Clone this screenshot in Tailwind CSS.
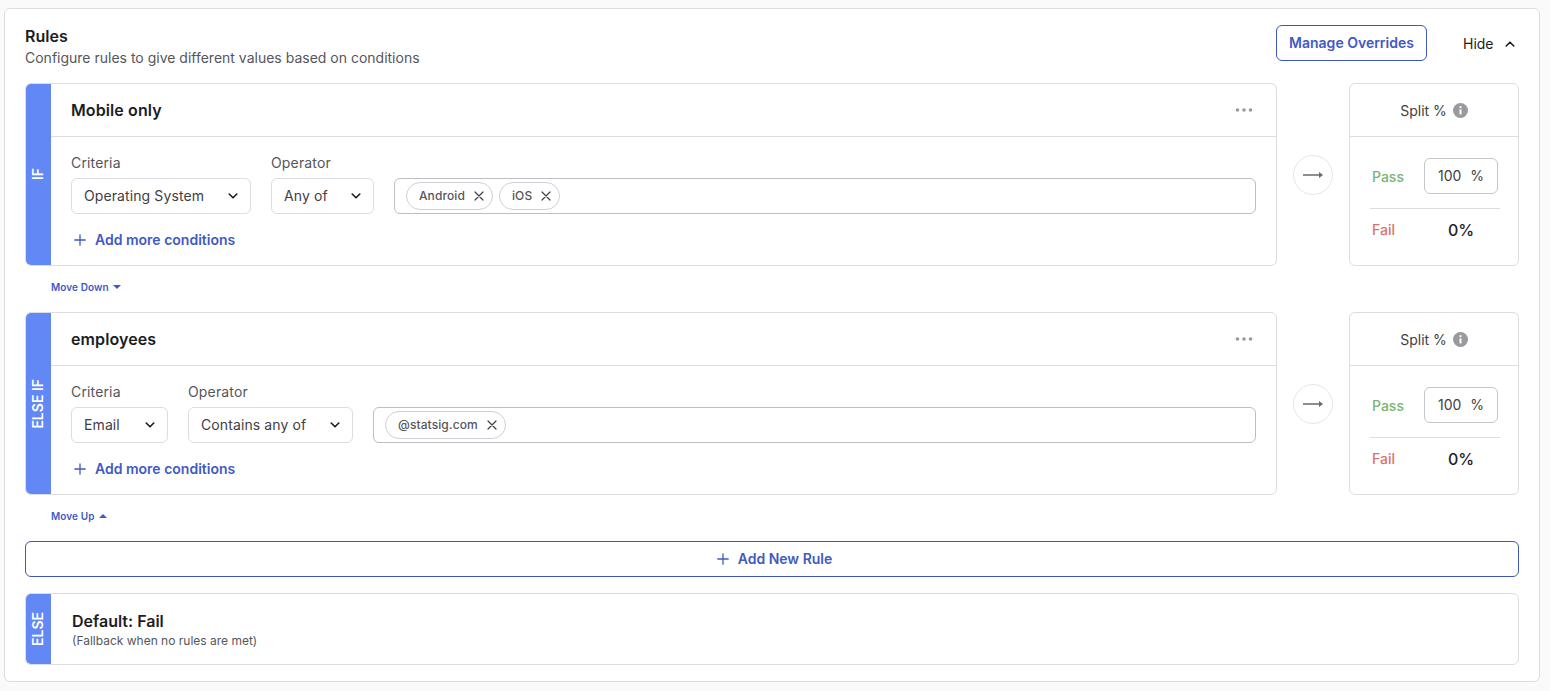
<!DOCTYPE html>
<html>
<head>
<meta charset="utf-8">
<script src="https://cdn.jsdelivr.net/npm/@tailwindcss/browser@4"></script>
</head>
<body class="bg-[#fafafb] font-['Inter',sans-serif] text-[#1d1d1f]">
<div class="w-[1550px] h-[691px] overflow-hidden pt-2 pl-1">
  <div class="w-[1536px] h-[674px] bg-white border border-[#dcdde3] rounded-md px-5 flex flex-col">
    <div class="h-[74px] flex items-start justify-between shrink-0">
      <div class="pt-[17px]">
        <div class="text-base font-semibold leading-5 text-[#1d1d1f]">Rules</div>
        <div class="text-sm leading-[23px] text-[#55565c]">Configure rules to give different values based on conditions</div>
      </div>
      <div class="flex items-center pt-4">
        <div class="w-[151px] h-9 border border-[#3f57b8] rounded-md flex items-center justify-center text-sm font-semibold text-[#3f5ac4]">Manage Overrides</div>
        <div class="w-[92px] pl-[36px] pt-[2px] flex items-center gap-[11px] text-sm text-[#1d1d1f]">Hide
          <svg class="w-[10px] h-[6px]" viewBox="0 0 10 6" fill="none" stroke="#1d1d1f" stroke-width="1.6" stroke-linecap="round" stroke-linejoin="round"><path d="M1.2 5 5 1.2 8.8 5"/></svg>
        </div>
      </div>
    </div>

    <!-- rule 1 -->
    <div class="flex h-[183px] shrink-0">
      <div class="w-[1252px] flex border border-[#dcdde3] rounded-md overflow-hidden">
        <div class="w-[26px] bg-[#6188f5] flex items-center justify-center -my-px -ml-px"><span class="text-white text-sm font-semibold [writing-mode:vertical-rl] rotate-180">IF</span></div>
        <div class="flex-1 flex flex-col">
          <div class="h-[53px] border-b border-[#dcdde3] flex items-center justify-between pl-5 pr-[23px]">
            <div class="text-base font-semibold tracking-[0.1px] text-[#1d1d1f]">Mobile only</div>
            <svg class="w-[18px] h-1" viewBox="0 0 18 4" fill="#9a9a9e"><circle cx="2.5" cy="2" r="1.8"/><circle cx="9" cy="2" r="1.8"/><circle cx="15.5" cy="2" r="1.8"/></svg>
          </div>
          <div class="pl-5 pr-[20px] flex-1">
            <div class="flex gap-5 items-end mt-[15px]">
              <div class="w-[180px]">
                <div class="text-sm leading-[22px] h-[26px] tracking-[0.15px] text-[#55565c]">Criteria</div>
                <div class="h-9 border border-[#dcdde3] rounded-md flex items-center justify-between pl-3 pr-3 text-sm tracking-[0.1px] text-[#3f4045]">Operating System
                  <svg class="w-[10px] h-[6px]" viewBox="0 0 10 6" fill="none" stroke="#1d1d1f" stroke-width="1.6" stroke-linecap="round" stroke-linejoin="round"><path d="M1.2 1 5 4.8 8.8 1"/></svg>
                </div>
              </div>
              <div class="w-[103px]">
                <div class="text-sm leading-[22px] h-[26px] tracking-[0.15px] text-[#55565c]">Operator</div>
                <div class="h-9 border border-[#dcdde3] rounded-md flex items-center justify-between pl-3 pr-3 text-sm tracking-[0.1px] text-[#3f4045]">Any of
                  <svg class="w-[10px] h-[6px]" viewBox="0 0 10 6" fill="none" stroke="#1d1d1f" stroke-width="1.6" stroke-linecap="round" stroke-linejoin="round"><path d="M1.2 1 5 4.8 8.8 1"/></svg>
                </div>
              </div>
              <div class="flex-1 h-9 border border-[#bdbec4] rounded-md flex items-center pl-[11px] gap-[6px]">
                <div class="h-7 border border-[#cfd0d6] rounded-full flex items-center pl-3 pr-[8px] gap-[9px] text-xs font-medium tracking-[0.1px] text-[#55565c]">Android
                  <svg class="w-[10px] h-[10px]" viewBox="0 0 10 10" fill="none" stroke="#3f4045" stroke-width="1.2" stroke-linecap="round"><path d="M1 1l8 8M9 1l-8 8"/></svg>
                </div>
                <div class="h-7 border border-[#cfd0d6] rounded-full flex items-center pl-3 pr-[8px] gap-[9px] text-xs font-medium tracking-[0.1px] text-[#55565c]">iOS
                  <svg class="w-[10px] h-[10px]" viewBox="0 0 10 10" fill="none" stroke="#3f4045" stroke-width="1.2" stroke-linecap="round"><path d="M1 1l8 8M9 1l-8 8"/></svg>
                </div>
              </div>
            </div>
            <div class="flex items-center gap-[9px] mt-[15px] pl-[3px] h-[22px] text-sm font-semibold text-[#3f5ac4]">
              <svg class="w-[12px] h-[12px]" viewBox="0 0 12 12" fill="none" stroke="#3f5ac4" stroke-width="1.3" stroke-linecap="round"><path d="M6 .8v10.4M.8 6h10.4"/></svg>
              Add more conditions
            </div>
          </div>
        </div>
      </div>
      <div class="w-[72px] flex justify-center pt-[72px]">
        <div class="w-10 h-10 rounded-full border border-[#e6e6ea] flex items-center justify-center">
          <svg class="w-5 h-[8px]" viewBox="0 0 20 8" fill="#6a6a6e"><path d="M0 3.200h16V1l4 3-4 3V4.800H0z"/></svg>
        </div>
      </div>
      <div class="w-[170px] border border-[#dcdde3] rounded-md flex flex-col">
        <div class="h-[53px] border-b border-[#dcdde3] flex items-center justify-center gap-[6px] pt-[2px] text-sm text-[#3f4045]">Split %
          <svg class="w-[15px] h-[15px] -translate-y-px" viewBox="0 0 15 15"><circle cx="7.5" cy="7.5" r="7.500" fill="#9a9a9e"/><circle cx="7.500" cy="4.200" r="1.100" fill="#fff"/><rect x="6.500" y="6.400" width="2" height="5" fill="#fff"/></svg>
        </div>
        <div class="px-5 pt-[21px]">
          <div class="flex items-center justify-between h-9">
            <span class="text-sm font-medium text-[#79b473] pl-[2px] pt-[1px]">Pass</span>
            <div class="w-[74px] h-9 border border-[#c5c6cc] rounded-md flex items-center justify-between pl-[13px] pr-[13px] text-sm text-[#3f4045]"><span>100</span><span>%</span></div>
          </div>
          <div class="border-t border-[#dcdde3] mt-[14px] -mr-[2px]"></div>
          <div class="flex items-center h-[42px]">
            <span class="text-sm font-medium text-[#d9736a] pl-[2px] w-[78px]">Fail</span>
            <span class="text-base font-medium text-[#1d1d1f]">0%</span>
          </div>
        </div>
      </div>
    </div>

    <div class="h-[46px] shrink-0 pl-[26px] pt-[13px] flex items-start gap-[4px] text-[10px] leading-[16px] font-semibold tracking-[0.1px] text-[#3f5ac4]">Move Down
      <svg class="w-[8px] h-1 mt-[6px]" viewBox="0 0 8 4" fill="#3f5ac4"><path d="M0 0h8L4 4z"/></svg>
    </div>

    <!-- rule 2 -->
    <div class="flex h-[183px] shrink-0">
      <div class="w-[1252px] flex border border-[#dcdde3] rounded-md overflow-hidden">
        <div class="w-[26px] bg-[#6188f5] flex items-center justify-center -my-px -ml-px"><span class="text-white text-sm font-semibold [writing-mode:vertical-rl] rotate-180">ELSE IF</span></div>
        <div class="flex-1 flex flex-col">
          <div class="h-[53px] border-b border-[#dcdde3] flex items-center justify-between pl-5 pr-[23px]">
            <div class="text-base font-semibold tracking-[0.1px] text-[#1d1d1f]">employees</div>
            <svg class="w-[18px] h-1" viewBox="0 0 18 4" fill="#9a9a9e"><circle cx="2.5" cy="2" r="1.8"/><circle cx="9" cy="2" r="1.8"/><circle cx="15.5" cy="2" r="1.8"/></svg>
          </div>
          <div class="pl-5 pr-[20px] flex-1">
            <div class="flex gap-5 items-end mt-[15px]">
              <div class="w-[97px]">
                <div class="text-sm leading-[22px] h-[26px] tracking-[0.15px] text-[#55565c]">Criteria</div>
                <div class="h-9 border border-[#dcdde3] rounded-md flex items-center justify-between pl-3 pr-3 text-sm tracking-[0.1px] text-[#3f4045]">Email
                  <svg class="w-[10px] h-[6px]" viewBox="0 0 10 6" fill="none" stroke="#1d1d1f" stroke-width="1.6" stroke-linecap="round" stroke-linejoin="round"><path d="M1.2 1 5 4.8 8.8 1"/></svg>
                </div>
              </div>
              <div class="w-[165px]">
                <div class="text-sm leading-[22px] h-[26px] tracking-[0.15px] text-[#55565c]">Operator</div>
                <div class="h-9 border border-[#dcdde3] rounded-md flex items-center justify-between pl-3 pr-3 text-sm tracking-[0.1px] text-[#3f4045]">Contains any of
                  <svg class="w-[10px] h-[6px]" viewBox="0 0 10 6" fill="none" stroke="#1d1d1f" stroke-width="1.6" stroke-linecap="round" stroke-linejoin="round"><path d="M1.2 1 5 4.8 8.8 1"/></svg>
                </div>
              </div>
              <div class="flex-1 h-9 border border-[#bdbec4] rounded-md flex items-center pl-[11px]">
                <div class="h-7 border border-[#cfd0d6] rounded-full flex items-center pl-3 pr-[8px] gap-[9px] text-xs font-medium tracking-[0.1px] text-[#55565c]">@statsig.com
                  <svg class="w-[10px] h-[10px]" viewBox="0 0 10 10" fill="none" stroke="#3f4045" stroke-width="1.2" stroke-linecap="round"><path d="M1 1l8 8M9 1l-8 8"/></svg>
                </div>
              </div>
            </div>
            <div class="flex items-center gap-[9px] mt-[15px] pl-[3px] h-[22px] text-sm font-semibold text-[#3f5ac4]">
              <svg class="w-[12px] h-[12px]" viewBox="0 0 12 12" fill="none" stroke="#3f5ac4" stroke-width="1.3" stroke-linecap="round"><path d="M6 .8v10.4M.8 6h10.4"/></svg>
              Add more conditions
            </div>
          </div>
        </div>
      </div>
      <div class="w-[72px] flex justify-center pt-[72px]">
        <div class="w-10 h-10 rounded-full border border-[#e6e6ea] flex items-center justify-center">
          <svg class="w-5 h-[8px]" viewBox="0 0 20 8" fill="#6a6a6e"><path d="M0 3.200h16V1l4 3-4 3V4.800H0z"/></svg>
        </div>
      </div>
      <div class="w-[170px] border border-[#dcdde3] rounded-md flex flex-col">
        <div class="h-[53px] border-b border-[#dcdde3] flex items-center justify-center gap-[6px] pt-[2px] text-sm text-[#3f4045]">Split %
          <svg class="w-[15px] h-[15px] -translate-y-px" viewBox="0 0 15 15"><circle cx="7.5" cy="7.5" r="7.500" fill="#9a9a9e"/><circle cx="7.500" cy="4.200" r="1.100" fill="#fff"/><rect x="6.500" y="6.400" width="2" height="5" fill="#fff"/></svg>
        </div>
        <div class="px-5 pt-[21px]">
          <div class="flex items-center justify-between h-9">
            <span class="text-sm font-medium text-[#79b473] pl-[2px] pt-[1px]">Pass</span>
            <div class="w-[74px] h-9 border border-[#c5c6cc] rounded-md flex items-center justify-between pl-[13px] pr-[13px] text-sm text-[#3f4045]"><span>100</span><span>%</span></div>
          </div>
          <div class="border-t border-[#dcdde3] mt-[14px] -mr-[2px]"></div>
          <div class="flex items-center h-[42px]">
            <span class="text-sm font-medium text-[#d9736a] pl-[2px] w-[78px]">Fail</span>
            <span class="text-base font-medium text-[#1d1d1f]">0%</span>
          </div>
        </div>
      </div>
    </div>

    <div class="h-[46px] shrink-0 pl-[26px] pt-[13px] flex items-start gap-[4px] text-[10px] leading-[16px] font-semibold tracking-[0.1px] text-[#3f5ac4]">Move Up
      <svg class="w-[8px] h-1 mt-[6px]" viewBox="0 0 8 4" fill="#3f5ac4"><path d="M0 4h8L4 0z"/></svg>
    </div>

    <div class="h-9 shrink-0 w-[1494px] border border-[#3f57b8] rounded-md flex items-center justify-center pl-[5px] gap-[9px] text-sm font-semibold text-[#3f5ac4]">
      <svg class="w-[12px] h-[12px]" viewBox="0 0 12 12" fill="none" stroke="#3f5ac4" stroke-width="1.3" stroke-linecap="round"><path d="M6 .8v10.4M.8 6h10.4"/></svg>
      Add New Rule
    </div>

    <div class="mt-4 h-[72px] shrink-0 w-[1494px] flex border border-[#dcdde3] rounded-md overflow-hidden">
      <div class="w-[26px] bg-[#6188f5] flex items-center justify-center -my-px -ml-px"><span class="text-white text-sm font-semibold [writing-mode:vertical-rl] rotate-180">ELSE</span></div>
      <div class="pl-[21px] pt-[17px]">
        <div class="text-base leading-5 font-semibold text-[#1d1d1f]">Default: Fail</div>
        <div class="text-xs leading-[16px] mt-[2px] text-[#55565c]">(Fallback when no rules are met)</div>
      </div>
    </div>
  </div>
</div>
</body>
</html>
